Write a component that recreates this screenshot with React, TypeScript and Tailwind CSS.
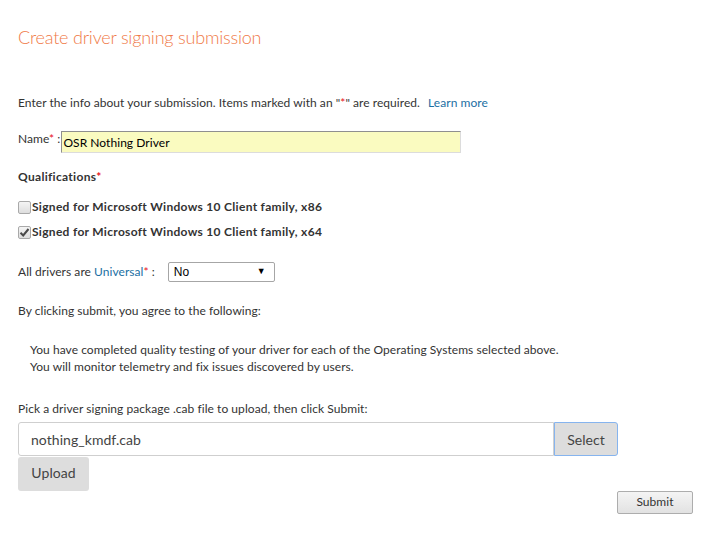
import { useState } from "react";

const Star = () => <span className="text-[#e8101a]">*</span>;

const Box = ({ checked }: { checked: boolean }) => (
  <span className="relative mr-[1px] inline-block h-[13px] w-[13px] rounded-[2px] border border-[#a9a9a9] bg-gradient-to-b from-[#f4f4f4] to-[#dedede]">
    {checked && (
      <svg viewBox="0 0 13 13" className="absolute -left-[1px] -top-[1px] h-[13px] w-[13px]">
        <path d="M2.5 6.8 L5.2 9.5 L10.5 3" fill="none" stroke="#4a4a4a" strokeWidth="2" />
      </svg>
    )}
  </span>
);

export default function App() {
  const [name, setName] = useState("OSR Nothing Driver");
  const [x86, setX86] = useState(false);
  const [x64, setX64] = useState(true);

  return (
    <div className="min-h-[539px] w-[711px] bg-white pl-[18px] font-['Lato','Liberation_Sans',sans-serif] text-[12px] tracking-[0.05px] text-[#333]">
      <h1 className="pt-[25px] text-[18px] leading-[24px] font-light tracking-[-0.2px] text-[#f07a48]">
        Create driver signing submission
      </h1>

      <p className="mt-[46px] leading-[16px]">
        Enter the info about your submission. Items marked with an "<Star />" are required.{" "}
        <a className="ml-[5px] text-[#1b6fa3]" href="#">
          Learn more
        </a>
      </p>

      <div className="mt-[20px] flex h-[22px] items-center">
        <span className="mr-[1px] self-start leading-[16px]">
          Name<Star /> :
        </span>
        <input
          value={name}
          onChange={(e) => setName(e.target.value)}
          className="h-[22px] w-[400px] border border-t-[#8f8f8f] border-l-[#8f8f8f] border-r-[#dcdcdc] border-b-[#dcdcdc] bg-[#fafbc0] pl-[1px] text-[12px] text-black outline-none"
        />
      </div>

      <div className="mt-[16px] font-bold leading-[16px] tracking-[0.3px]">
        Qualifications<Star />
      </div>

      <label className="mt-[14px] flex h-[16px] items-center font-bold tracking-[0.3px]" onClick={() => setX86(!x86)}>
        <Box checked={x86} />
        Signed for Microsoft Windows 10 Client family, x86
      </label>
      <label className="mt-[9px] flex h-[16px] items-center font-bold tracking-[0.3px]" onClick={() => setX64(!x64)}>
        <Box checked={x64} />
        Signed for Microsoft Windows 10 Client family, x64
      </label>

      <div className="mt-[22px] flex h-[20px] items-center">
        <span>
          All drivers are <span className="text-[#1b6fa3]">Universal</span>
          <Star /> :
        </span>
        <div className="ml-[13px] flex h-[20px] w-[107px] items-center justify-between rounded-[2px] border border-[#a6a6a6] pr-[8px] pl-[5px] font-['Liberation_Sans',sans-serif] text-[12px] text-black">
          <span>No</span>
          <span className="text-[9px]">▼</span>
        </div>
      </div>

      <p className="mt-[21px] leading-[16px]">By clicking submit, you agree to the following:</p>

      <ul className="mt-[22px] pl-[12px] leading-[17px]">
        <li>You have completed quality testing of your driver for each of the Operating Systems selected above.</li>
        <li>You will monitor telemetry and fix issues discovered by users.</li>
      </ul>

      <p className="mt-[26px] leading-[16px]">Pick a driver signing package .cab file to upload, then click Submit:</p>

      <div className="mt-[5px] flex h-[34px] w-[600px]">
        <div className="flex flex-1 items-center rounded-l-[3px] border border-[#cfcfcf] pl-[12px] text-[14px] text-[#444]">
          nothing_kmdf.cab
        </div>
        <button className="w-[64px] rounded-r-[3px] border border-[#86b4ee] bg-[#dddddd] text-[14px] text-[#444]">
          Select
        </button>
      </div>

      <button className="mt-[1px] h-[34px] w-[71px] rounded-[3px] bg-[#dddddd] pb-[3px] text-[14px] text-[#444]">
        Upload
      </button>

      <div className="flex w-[675px] justify-end">
        <button className="h-[23px] w-[76px] rounded-[2px] border border-[#adadad] bg-gradient-to-b from-[#f4f4f4] to-[#e2e2e2] pb-[1px] text-[12px] text-[#333]">
          Submit
        </button>
      </div>
    </div>
  );
}
